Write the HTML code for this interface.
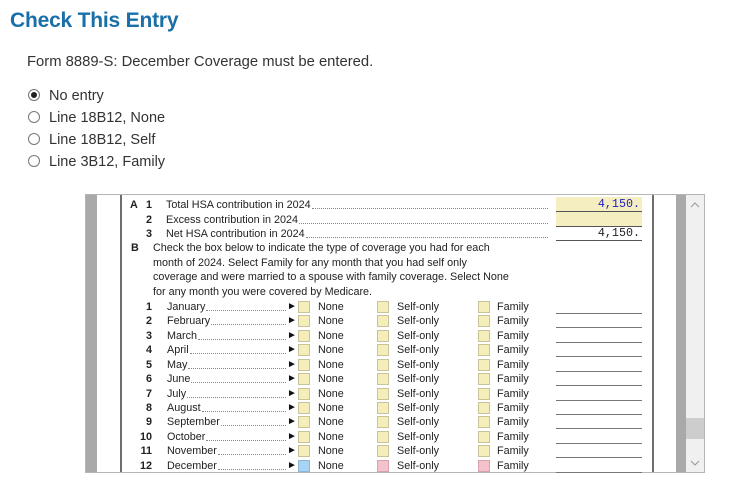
<!DOCTYPE html>
<html><head><meta charset="utf-8"><style>
*{margin:0;padding:0;box-sizing:border-box}
body{width:756px;height:490px;background:#fff;position:relative;overflow:hidden;font-family:"Liberation Sans",Arial,sans-serif;color:#333}
.a{position:absolute;white-space:nowrap}
h1{position:absolute;left:10px;top:9px;font-size:21px;font-weight:bold;color:#1a6fa8;letter-spacing:-0.2px}
.radio{position:absolute;left:28px;width:12px;height:12px;border:1px solid #777;border-radius:50%;background:#fff}
.radio.on::after{content:"";position:absolute;left:2px;top:2px;width:6px;height:6px;border-radius:50%;background:#222}
.rl{position:absolute;left:49px;font-size:14.5px;color:#333}
.f{font-size:10.8px;color:#222;line-height:14px}
.box{position:absolute;width:12px;height:12px;background:#f4eebb;border:1px solid #c9c39a}
.ln{position:absolute;left:556px;width:86px;height:1px;background:#555}
.fl{position:absolute;display:flex;align-items:flex-start;height:14px;white-space:nowrap}
.fl span{display:block;height:14px}
.fl span.d{flex:1;height:11px;border-bottom:1px dotted #888;margin-left:1px}
</style></head><body>
<h1>Check This Entry</h1>
<div class="a" style="left:27px;top:54px;font-size:14.8px;color:#333">Form 8889-S: December Coverage must be entered.</div>
<div class="radio on" style="top:89px"></div><div class="rl" style="top:88px">No entry</div>
<div class="radio" style="top:111px"></div><div class="rl" style="top:110px">Line 18B12, None</div>
<div class="radio" style="top:133px"></div><div class="rl" style="top:132px">Line 18B12, Self</div>
<div class="radio" style="top:155px"></div><div class="rl" style="top:154px">Line 3B12, Family</div>

<div style="position:absolute;left:85px;top:194px;width:620px;height:279px;border:1px solid #b5b5b5;background:#fff"></div>
<div style="position:absolute;left:86px;top:195px;width:11px;height:277px;background:#a9a9a9"></div>
<div style="position:absolute;left:120px;top:195px;width:2px;height:277px;background:#6e6e6e"></div>
<div style="position:absolute;left:652px;top:195px;width:2px;height:277px;background:#6e6e6e"></div>
<div style="position:absolute;left:676px;top:195px;width:10px;height:277px;background:#a9a9a9"></div>
<div style="position:absolute;left:686px;top:195px;width:18px;height:277px;background:#f0f0f0"></div>
<div style="position:absolute;left:686px;top:418px;width:18px;height:21px;background:#cdcdcd"></div>
<svg class="a" style="left:689px;top:200px" width="12" height="10"><path d="M2 7 L6 3 L10 7" fill="none" stroke="#999" stroke-width="1"/></svg>
<svg class="a" style="left:689px;top:458px" width="12" height="10"><path d="M2 3 L6 7 L10 3" fill="none" stroke="#999" stroke-width="1"/></svg>

<div style="position:absolute;left:556px;top:197px;width:86px;height:29px;background:#f5eec0"></div>
<div class="ln" style="top:211px"></div><div class="ln" style="top:226px"></div><div class="ln" style="top:240px"></div>
<div class="a" style="left:556px;top:197px;width:84px;text-align:right;font:11.7px 'Liberation Mono',monospace;color:#2222bb">4,150.</div>
<div class="a" style="left:556px;top:226px;width:84px;text-align:right;font:11.7px 'Liberation Mono',monospace;color:#222">4,150.</div>

<div class="a f" style="left:130px;top:198px;font-weight:bold">A</div>
<div class="a f" style="left:146px;top:198px;font-weight:bold">1</div>
<div class="fl f" style="left:166px;top:198px;width:382px"><span>Total HSA contribution in 2024</span><span class="d"></span></div>
<div class="a f" style="left:146px;top:213px;font-weight:bold">2</div>
<div class="fl f" style="left:166px;top:213px;width:382px"><span>Excess contribution in 2024</span><span class="d"></span></div>
<div class="a f" style="left:146px;top:227px;font-weight:bold">3</div>
<div class="fl f" style="left:166px;top:227px;width:382px"><span>Net HSA contribution in 2024</span><span class="d"></span></div>
<div class="a f" style="left:131px;top:241px;font-weight:bold">B</div>
<div class="a f" style="left:153px;top:241px;line-height:14.5px">Check the box below to indicate the type of coverage you had for each<br>month of 2024. Select Family for any month that you had self only<br>coverage and were married to a spouse with family coverage. Select None<br>for any month you were covered by Medicare.</div>

<div id="rows"></div>
<script>
var m=["January","February","March","April","May","June","July","August","September","October","November","December"];
var h="";
for(var i=0;i<12;i++){
 var c=307+i*14.42, t=c-7;
 var last=i==11;
 h+='<div class="a f" style="left:130px;top:'+t+'px;width:22px;text-align:right;font-weight:bold">'+(i+1)+'</div>';
 h+='<div class="fl f" style="left:167px;top:'+t+'px;width:119px"><span>'+m[i]+'</span><span class="d"></span></div>';
 h+='<div class="a" style="left:287px;top:'+(t+1)+'px;font-size:10px;line-height:12px;color:#111">&#9658;</div>';
 h+='<div class="box" style="left:298px;top:'+(c-6)+'px;'+(last?'background:#a9d3f5;border-color:#8fb6d6':'')+'"></div>';
 h+='<div class="a f" style="left:318px;top:'+t+'px">None</div>';
 h+='<div class="box" style="left:377px;top:'+(c-6)+'px;'+(last?'background:#f5c2cc;border-color:#d6a2ad':'')+'"></div>';
 h+='<div class="a f" style="left:397px;top:'+t+'px">Self-only</div>';
 h+='<div class="box" style="left:478px;top:'+(c-6)+'px;'+(last?'background:#f5c2cc;border-color:#d6a2ad':'')+'"></div>';
 h+='<div class="a f" style="left:497px;top:'+t+'px">Family</div>';
 h+='<div class="ln" style="top:'+(c+6)+'px;background:#777"></div>';
}
document.getElementById("rows").innerHTML=h;
</script>
</body></html>
